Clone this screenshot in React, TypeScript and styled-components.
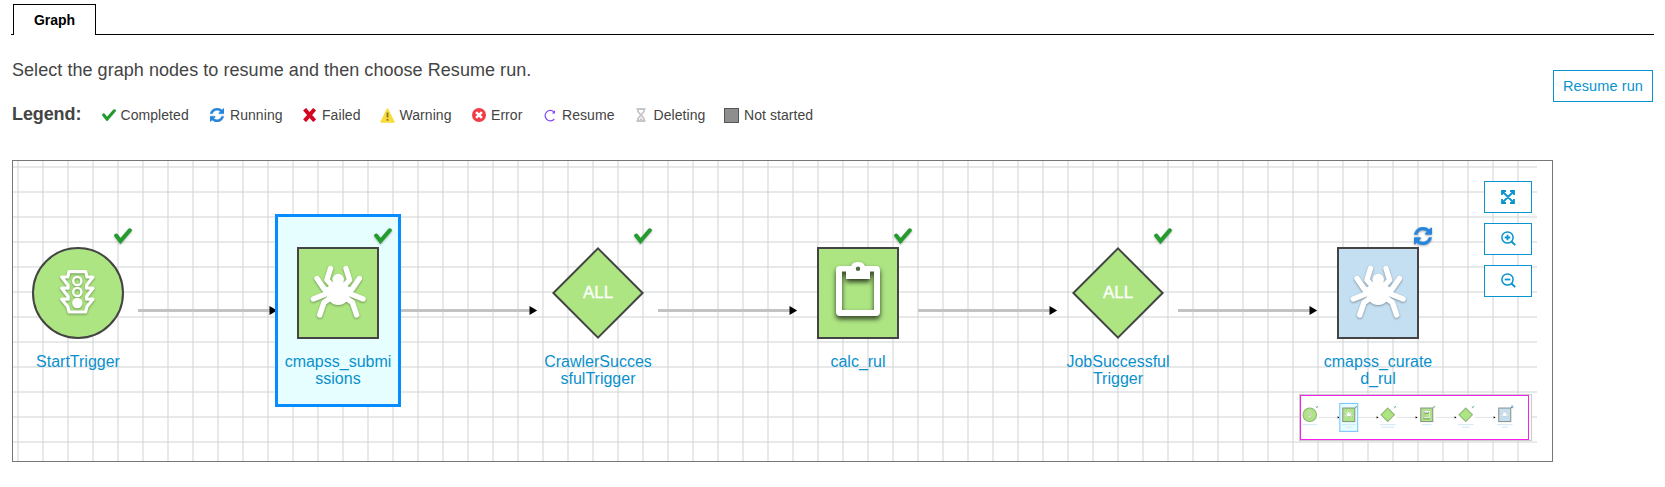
import React from 'react';
import styled, { createGlobalStyle } from 'styled-components';

const GlobalStyle = createGlobalStyle`
  * { box-sizing: border-box; }
  body {
    margin: 0;
    background: #fff;
    color: #444;
    font-family: "Liberation Sans", Arial, sans-serif;
  }
`;

const Page = styled.main`
  width: 1665px;
  height: 487px;
  padding: 4px 11px 0;
  overflow: hidden;
`;

const TabBar = styled.nav`
  display: flex;
  height: 31px;
  border-bottom: 1px solid #000;
  padding-left: 2px;
`;

const Tab = styled.button`
  width: 83px;
  height: 31px;
  padding: 0 0 1px;
  border: 1px solid #000;
  border-bottom: 0;
  background: #fff;
  color: #000;
  font: bold 14px "Liberation Sans", Arial, sans-serif;
`;

const Header = styled.header`
  display: flex;
  justify-content: space-between;
  align-items: flex-start;
  height: 125px;
  padding: 24px 1px 0;
`;

const Intro = styled.p`
  margin: 0;
  font-size: 18px;
  line-height: 22px;
  letter-spacing: 0.05px;
`;

const OutlineButton = styled.button<{ $w: number }>`
  display: flex;
  align-items: center;
  justify-content: center;
  width: ${(p) => p.$w}px;
  height: 32px;
  padding: 0 0 1px;
  border: 1px solid #0a94cf;
  background: #fff;
  color: #0a94cf;
  font: 14.5px "Liberation Sans", Arial, sans-serif;
  letter-spacing: 0.1px;
`;

const ResumeWrap = styled.div`
  padding-top: 11px;
`;

const Legend = styled.div`
  display: flex;
  align-items: center;
  height: 20px;
  margin-top: 23px;
`;

const LegendTitle = styled.strong`
  width: 90px;
  font-size: 18px;
  line-height: 20px;
  letter-spacing: -0.1px;
`;

const LegendItem = styled.span<{ $w: number; $slot: number }>`
  display: grid;
  grid-template-columns: ${(p) => p.$slot}px auto;
  align-items: center;
  width: ${(p) => p.$w}px;
  padding-top: 2px;
  font-size: 14px;
  line-height: 18px;
  letter-spacing: 0.06px;
  white-space: nowrap;
  svg { display: block; }
`;

const Swatch = styled.i`
  width: 15px;
  height: 15px;
  border: 1px solid #555;
  background: #8e8e8e;
`;

const Canvas = styled.section`
  position: relative;
  width: 1541px;
  height: 302px;
  margin-left: 1px;
  border: 1px solid #777;
  overflow: hidden;
`;

const Surface = styled.div<{ $mini?: boolean }>`
  position: absolute;
  inset: 0 auto auto 0;
  width: 1524px;
  height: ${(p) => (p.$mini ? 302 : 300)}px;
  background-image:
    linear-gradient(90deg, rgba(208, 212, 212, 0.5) 2px, transparent 2px),
    linear-gradient(rgba(208, 212, 212, 0.5) 2px, transparent 2px);
  background-size: 25px 25px;
  background-position: 4px 5px;
  transform-origin: 0 0;
  transform: ${(p) => (p.$mini ? 'scale(0.15)' : 'none')};
`;

const Edges = styled.svg`
  position: absolute;
  left: 0;
  top: 0;
`;

const NodeBox = styled.div<{ $x: number; $selected?: boolean; $mini?: boolean }>`
  position: absolute;
  left: ${(p) => p.$x - 63}px;
  top: 53px;
  width: 126px;
  height: 193px;
  padding-top: ${(p) => (p.$mini ? 26 : 30)}px;
  border: ${(p) => (p.$mini ? 7 : 3)}px solid
    ${(p) => (p.$selected ? (p.$mini ? '#7cc6ff' : '#068cff') : 'transparent')};
  background: ${(p) => (p.$selected ? '#e6feff' : 'transparent')};
  display: flex;
  flex-direction: column;
  align-items: center;
`;

const Shape = styled.svg`
  display: block;
  flex: none;
  overflow: visible;
`;

const Status = styled.div<{ $running?: boolean }>`
  position: absolute;
  left: 96px;
  top: ${(p) => (p.$running ? 10 : 11)}px;
  filter: drop-shadow(0 1px 1px rgba(0, 0, 0, 0.3));
  svg { display: block; }
`;

const Label = styled.div`
  margin-top: 14px;
  color: #0a90cd;
  font-size: 16px;
  line-height: 17px;
  text-align: center;
  white-space: pre;
`;

const LabelBar = styled.i<{ $w: number }>`
  display: block;
  width: ${(p) => p.$w}px;
  height: 7px;
  margin-top: 10px;
  background: #d3e9f4;
  &:first-of-type { margin-top: 16px; }
`;

const Controls = styled.div`
  position: absolute;
  right: 20px;
  top: 20px;
  display: flex;
  flex-direction: column;
  gap: 10px;
`;

const MiniMap = styled.div`
  position: absolute;
  left: 1286px;
  top: 233px;
  width: 233px;
  height: 47px;
  border: 1px solid #ccc;
  background: #fff;
  overflow: hidden;
`;

const MiniView = styled.div`
  position: absolute;
  left: 0;
  top: 0;
  width: 229px;
  height: 45px;
  border: 1px solid #f81eee;
`;

const CheckIcon = ({ w = 18 }: { w?: number }) => (
  <svg width={w} height={w * 0.9} viewBox="0 0 18 16.2">
    <path d="M2.200 7.600 6.500 13 15.800 2.300" fill="none" stroke="#239b2e" strokeWidth="4" strokeLinecap="round" strokeLinejoin="miter" />
  </svg>
);

const RefreshIcon = ({ s = 18 }: { s?: number }) => (
  <svg width={s} height={s} viewBox="0 0 1536 1536">
    <path
      fill="#2786dc"
      stroke="#2786dc"
      strokeWidth="40"
      d="M1511 928q0 5-1 7-64 268-268 434.500T764 1536q-146 0-282.500-55T238 1324l-129 129q-19 19-45 19t-45-19-19-45V960q0-26 19-45t45-19h448q26 0 45 19t19 45-19 45l-137 137q71 66 161 102t187 36q134 0 250-65t186-179q11-17 53-117 8-23 30-23h192q13 0 22.500 9.500t9.500 22.500zm25-800v448q0 26-19 45t-45 19h-448q-26 0-45-19t-19-45 19-45l138-138Q969 256 768 256q-134 0-250 65T332 500q-11 17-53 117-8 23-30 23H50q-13 0-22.500-9.500T18 608v-7q65-268 270-434.500T768 0q146 0 284 55.500T1297 212l130-129q19-19 45-19t45 19 19 45z"
    />
  </svg>
);

const FailedIcon = () => (
  <svg width="14" height="14" viewBox="0 0 14 14">
    <path d="M1.600 1.200 11.600 12.800M11.600 1.200 1.600 12.800" stroke="#d3061f" strokeWidth="3.900" />
  </svg>
);

const WarningIcon = () => (
  <svg width="15" height="15" viewBox="0 0 15 15">
    <path d="M7.500 1 14 14H1Z" fill="#fadb38" stroke="#fadb38" strokeWidth="1.500" strokeLinejoin="round" />
    <path d="M7.500 4.500v5M7.500 11v1.700" stroke="#77723e" strokeWidth="1.700" />
  </svg>
);

const ErrorIcon = () => (
  <svg width="14" height="14" viewBox="0 0 14 14">
    <circle cx="7" cy="7" r="7" fill="#f23b45" />
    <path d="m4.100 4.100 5.800 5.800M9.900 4.100 4.100 9.900" stroke="#fff" strokeWidth="2.600" />
  </svg>
);

const ResumeIcon = () => (
  <svg width="12" height="13" viewBox="0 0 12 13">
    <path d="M10 3A5.200 5.200 0 1 0 10.300 10" fill="none" stroke="#8248f5" strokeWidth="1.200" />
    <path d="M11 1.300V4.500H7.800Z" fill="#8248f5" />
  </svg>
);

const DeletingIcon = () => (
  <svg width="10" height="14" viewBox="0 0 10 14">
    <path d="M.5 1h9M.5 13h9M2 1v2.500L5 7l3-3.500V1M2 13v-2.500L5 7l3 3.500V13" fill="none" stroke="#c6c6c6" strokeWidth="1.800" />
    <path d="M3 12.500h4L5 9.500z" fill="#c6c6c6" />
  </svg>
);

const ExpandIcon = () => (
  <svg width="14" height="14" viewBox="0 0 14 14" fill="none" stroke="#0a94cf" strokeWidth="1.800">
    <path d="M1 5V1h4M9 1h4v4M13 9v4H9M5 13H1V9M1 1l12 12M13 1 1 13" />
  </svg>
);

const ZoomIcon = ({ plus }: { plus?: boolean }) => (
  <svg width="15" height="15" viewBox="0 0 15 15" fill="none" stroke="#0a94cf" strokeWidth="1.500">
    <circle cx="6.500" cy="6.500" r="5.600" />
    <path d="m10.500 10.500 3.700 3.700" strokeWidth="1.900" />
    <path d={plus ? 'M3.700 6.500h5.600M6.500 3.700v5.600' : 'M3.700 6.500h5.600'} strokeWidth="1.800" />
  </svg>
);

const IconLayer = styled.g`
  filter: drop-shadow(0 1px 1px rgba(0, 0, 0, 0.35));
`;

const ClipboardLayer = styled.g`
  filter: drop-shadow(0 3px 2.5px rgba(0, 0, 0, 0.75));
`;

const Spider = () => (
  <IconLayer fill="none" stroke="#fff" strokeWidth="5.400" strokeLinecap="round" strokeLinejoin="round">
    <circle cx="46.200" cy="32.600" r="5.800" fill="#fff" stroke="none" />
    <ellipse cx="46.200" cy="46" rx="11.700" ry="12" fill="#fff" stroke="none" />
    <path d="M38.500 21.500 34.900 33l6 6.500M54 21.500 57.600 33l-6 6.500" />
    <path d="M25 31.500 32.500 42.500l9 1.500M67.400 31.500 59.900 42.500l-9 1.500" />
    <path d="M21.300 52 35 46.500h22.400L71.100 52" />
    <path d="M27.700 68 32 55.500l7-5M64.700 68 60.400 55.500l-7-5" />
  </IconLayer>
);

const TrafficLight = () => (
  <IconLayer fill="none" stroke="#fff" strokeWidth="3.200" strokeLinejoin="round">
    <path d="M37 24.700H53.700L55 30H61L54.600 38.300V41.200H61L54.600 49.500V52.200H61L55 59.500 53.500 65H37.300L35.700 59.500 29.700 52.200H36.100V49.500L29.700 41.200H36.100V38.300L29.700 30H35.700Z" />
    <circle cx="45.300" cy="34" r="4.100" strokeWidth="2.400" />
    <circle cx="45.300" cy="45" r="4.100" strokeWidth="2.400" />
    <circle cx="45.300" cy="56" r="5.200" fill="#fff" stroke="none" />
  </IconLayer>
);

const Clipboard = () => (
  <ClipboardLayer>
    <path
      fill="#fff"
      fillRule="evenodd"
      d="M28 19H39.200a7 5.200 0 0 1 13.600 0H64a4 4 0 0 1 4 4V65a4 4 0 0 1-4 4H28a4 4 0 0 1-4-4V23a4 4 0 0 1 4-4ZM30 24.500V63H62V24.500H58V32H34V24.500ZM46 19.500a2.200 2.200 0 1 0 0 4.400 2.200 2.200 0 0 0 0-4.400Z"
    />
  </ClipboardLayer>
);

type Kind = 'start' | 'crawler' | 'all' | 'job';
interface GraphNode {
  kind: Kind;
  lines: string[];
  running?: boolean;
  selected?: boolean;
}

const nodes: GraphNode[] = [
  { kind: 'start', lines: ['StartTrigger'] },
  { kind: 'crawler', lines: ['cmapss_submi', 'ssions'], selected: true },
  { kind: 'all', lines: ['CrawlerSucces', 'sfulTrigger'] },
  { kind: 'job', lines: ['calc_rul'] },
  { kind: 'all', lines: ['JobSuccessful', 'Trigger'] },
  { kind: 'crawler', lines: ['cmapss_curate', 'd_rul'], running: true },
];

const NodeShape = ({ node, mini }: { node: GraphNode; mini?: boolean }) => {
  const fill = node.running ? '#c4dff2' : '#ade583';
  const edge = node.kind === 'crawler' || node.kind === 'job' ? '#8b9388' : '#8fb477';
  const outline = { fill, stroke: mini ? edge : '#444', strokeWidth: mini ? 7 : 2 };
  return (
    <Shape width="92" height="92" viewBox="0 0 92 92">
      {node.kind === 'start' && <circle cx="46" cy="46" r="45" {...outline} />}
      {node.kind === 'all' && <path d="M46 1.400 90.600 46 46 90.600 1.400 46Z" {...outline} />}
      {(node.kind === 'crawler' || node.kind === 'job') && <rect x="6" y="1" width="80" height="90" {...outline} />}
      {node.kind === 'start' && <TrafficLight />}
      {node.kind === 'crawler' && <Spider />}
      {node.kind === 'job' && <Clipboard />}
      {node.kind === 'all' && !mini && (
        <text x="46" y="51" textAnchor="middle" fill="#fff" stroke="#fff" strokeWidth=".3" fontSize="17">ALL</text>
      )}
    </Shape>
  );
};

const Graph = ({ mini }: { mini?: boolean }) => (
  <Surface $mini={mini}>
    <Edges width="1524" height="300">
      {nodes.slice(1).map((_, i) => (
        <g key={i} transform={`translate(${i * 260} 0)`}>
          <path d="M125 149.500H257" stroke="#c3c3c3" strokeWidth="3" />
          <path d={mini ? 'M251 142v15l13-7.500Z' : 'M256.500 145v9l7.700-4.500Z'} fill="#000" />
        </g>
      ))}
    </Edges>
    {nodes.map((node, i) => (
      <NodeBox key={i} $x={65 + i * 260} $selected={node.selected} $mini={mini}>
        <Status $running={node.running}>{node.running ? <RefreshIcon /> : <CheckIcon />}</Status>
        <NodeShape node={node} mini={mini} />
        {mini
          ? node.lines.map((line) => <LabelBar key={line} $w={line.length * 8} />)
          : <Label>{node.lines.join('\n')}</Label>}
      </NodeBox>
    ))}
  </Surface>
);

const legend = [
  { name: 'Completed', icon: <CheckIcon w={14} />, slot: 18.5, width: 108 },
  { name: 'Running', icon: <RefreshIcon s={14} />, slot: 20, width: 93 },
  { name: 'Failed', icon: <FailedIcon />, slot: 19, width: 77 },
  { name: 'Warning', icon: <WarningIcon />, slot: 19.5, width: 92 },
  { name: 'Error', icon: <ErrorIcon />, slot: 19, width: 72 },
  { name: 'Resume', icon: <ResumeIcon />, slot: 18, width: 92 },
  { name: 'Deleting', icon: <DeletingIcon />, slot: 17.5, width: 88 },
  { name: 'Not started', icon: <Swatch />, slot: 20, width: 100 },
];

export default function App() {
  return (
    <Page>
      <GlobalStyle />
      <TabBar><Tab>Graph</Tab></TabBar>
      <Header>
        <div>
          <Intro>Select the graph nodes to resume and then choose Resume run.</Intro>
          <Legend>
            <LegendTitle>Legend:</LegendTitle>
            {legend.map((item) => (
              <LegendItem key={item.name} $w={item.width} $slot={item.slot}>
                {item.icon}
                <span>{item.name}</span>
              </LegendItem>
            ))}
          </Legend>
        </div>
        <ResumeWrap><OutlineButton $w={100}>Resume run</OutlineButton></ResumeWrap>
      </Header>
      <Canvas>
        <Graph />
        <Controls>
          <OutlineButton $w={48} aria-label="Fit"><ExpandIcon /></OutlineButton>
          <OutlineButton $w={48} aria-label="Zoom in"><ZoomIcon plus /></OutlineButton>
          <OutlineButton $w={48} aria-label="Zoom out"><ZoomIcon /></OutlineButton>
        </Controls>
        <MiniMap>
          <Graph mini />
          <MiniView />
        </MiniMap>
      </Canvas>
    </Page>
  );
}
